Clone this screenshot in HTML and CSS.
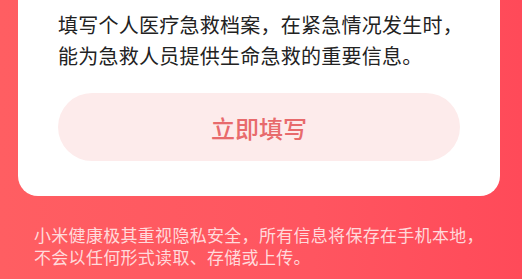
FILE: index.html
```html
<!DOCTYPE html>
<html lang="zh-CN">
<head>
    <meta charset="UTF-8">
    <meta name="viewport" content="width=device-width, initial-scale=1.0">
    <title>急救档案</title>
    <link rel="stylesheet" href="styles.css">
</head>
<body>

<div class="page">
    <div class="card">
        <p class="intro">填写个人医疗急救档案，在紧急情况发生时，<br>能为急救人员提供生命急救的重要信息。</p>
        <button class="fill-btn">立即填写</button>
    </div>

    <p class="privacy">小米健康极其重视隐私安全，所有信息将保存在手机本地，<br>不会以任何形式读取、存储或上传。</p>
</div>

</body>
</html>
```

FILE: styles.css
```css
body {
    margin: 0;
    padding: 0;
    font-family: "Noto Sans CJK SC", "Noto Sans", sans-serif;
}

.page {
    width: 522px;
    height: 279px;
    overflow: hidden;
    background: linear-gradient(90deg, #ff5e62 0%, #ff5560 60%, #ff4a59 100%);
}

.card {
    margin: 0 22px 0 18px;
    padding: 9px 40px 35px 40px;
    background-color: white;
    border-radius: 0 0 20px 20px;
}

.intro {
    margin: 0;
    font-size: 20px;
    line-height: 31px;
    letter-spacing: 0.25px;
    white-space: nowrap;
    color: #222;
}

.fill-btn {
    display: block;
    width: 100%;
    height: 68px;
    margin-top: 22px;
    border: none;
    border-radius: 34px;
    background-color: #fdebeb;
    color: #e86a6c;
    font-family: inherit;
    font-size: 24px;
    font-weight: 500;
    cursor: pointer;
}

.privacy {
    margin: 28px 0 0 34px;
    font-size: 17px;
    line-height: 22px;
    letter-spacing: 0.3px;
    white-space: nowrap;
    color: rgba(255, 255, 255, 0.78);
}
```
